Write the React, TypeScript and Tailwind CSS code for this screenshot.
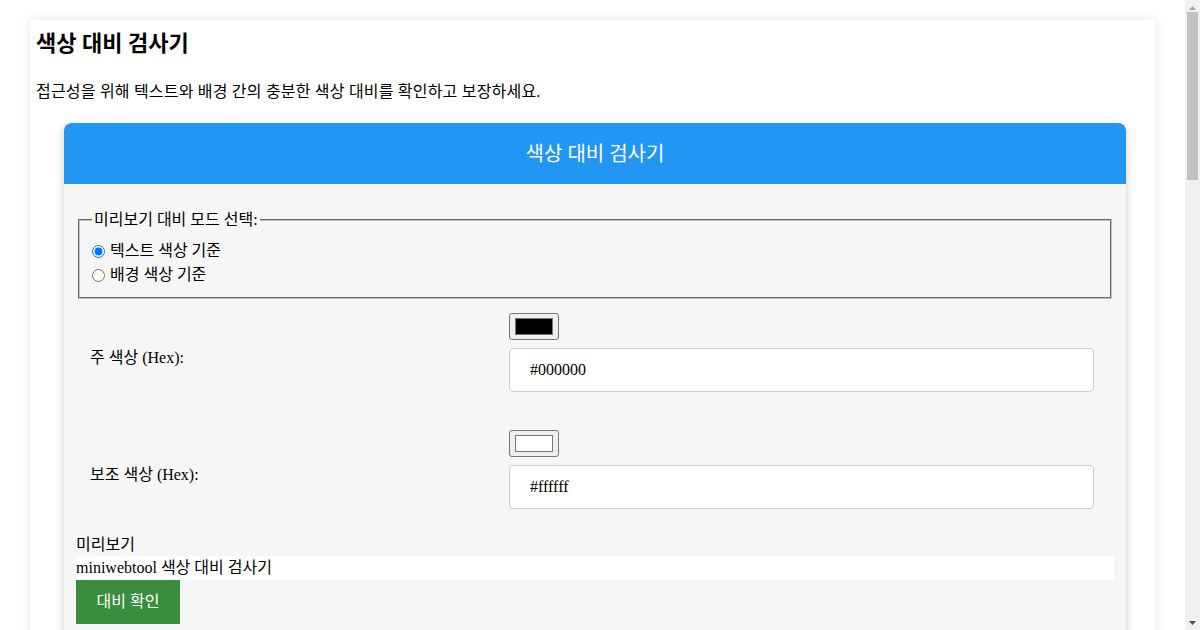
import React from "react";

const FONT = "[font-family:'Liberation_Serif','Noto_Sans_CJK_KR',serif]";

function Swatch({ color }: { color: string }) {
  return (
    <div className="w-[50px] h-[27px] border border-[#767676] rounded-[3px] bg-[#efefef] px-[5px] py-[4px]">
      <div className="w-full h-full border border-[#777777]" style={{ background: color }} />
    </div>
  );
}

function Row({ label, color, value }: { label: string; color: string; value: string }) {
  return (
    <div className="grid grid-cols-[419px_1fr] items-center">
      <div className="px-[12px] pt-[10px]">{label}</div>
      <div className="px-[12px] py-[12px]">
        <Swatch color={color} />
        <div className="mt-[8px] h-[44px] w-[585px] border border-[#cccccc] rounded-[4px] bg-white pl-[20px] flex items-center">
          {value}
        </div>
      </div>
    </div>
  );
}

function Scrollbar() {
  return (
    <div className="w-[15px] h-[630px] bg-[#f1f1f1] flex flex-col items-center shrink-0">
      <div className="h-[15px] w-full flex items-center justify-center">
        <svg width="7" height="4" viewBox="0 0 7 4"><path d="M0 4 L3.5 0 L7 4 Z" fill="#a3a3a3" /></svg>
      </div>
      <div className="w-[11px] h-[168px] bg-[#c1c1c1] mt-[-3px]" />
      <div className="flex-1" />
      <div className="h-[15px] w-full flex items-center justify-center">
        <svg width="7" height="4" viewBox="0 0 7 4"><path d="M0 0 L7 0 L3.5 4 Z" fill="#505050" /></svg>
      </div>
    </div>
  );
}

export default function App() {
  return (
    <div className={`${FONT} h-[630px] overflow-hidden flex bg-white text-black text-[16px]`}>
      <div className="flex-1 pt-[20px] px-[30px]">
        <div className="bg-white shadow-[0_0_10px_rgba(0,0,0,0.1)] p-[6px] h-[700px]">
          <h2 className="text-[22px] font-bold leading-[35px]">색상 대비 검사기</h2>
          <p className="mt-[19px] leading-[24px] tracking-[0.2px]">접근성을 위해 텍스트와 배경 간의 충분한 색상 대비를 확인하고 보장하세요.</p>
          <div className="mt-[19px] ml-[28px] w-[1062px] rounded-t-[8px] bg-[#f6f6f6] shadow-[0_2px_8px_rgba(0,0,0,0.2)] h-[600px]">
            <div className="h-[61px] rounded-t-[8px] bg-[#2196f3] text-white text-[20px] flex items-center justify-center">
              색상 대비 검사기
            </div>
            <div className="px-[12px] pt-[24px]">
              <fieldset className="mx-[2px] border-2 [border-style:groove] border-[#c0c0c0] px-[12px] pt-[8px] pb-[10px]">
                <legend className="px-[2px] leading-[23px]">미리보기 대비 모드 선택:</legend>
                <label className="flex items-center h-[24px]">
                  <input type="radio" name="mode" defaultChecked className="m-0 mr-[5px] w-[13px] h-[13px]" />
                  텍스트 색상 기준
                </label>
                <label className="flex items-center h-[24px]">
                  <input type="radio" name="mode" className="m-0 mr-[5px] w-[13px] h-[13px]" />
                  배경 색상 기준
                </label>
              </fieldset>
              <div className="mt-[2px] mx-[2px] flex flex-col gap-[14px]">
                <Row label="주 색상 (Hex):" color="#000000" value="#000000" />
                <Row label="보조 색상 (Hex):" color="#ffffff" value="#ffffff" />
              </div>
              <div className="mt-[12px] leading-[23px]">미리보기</div>
              <div className="w-[1038px] h-[24px] bg-white leading-[24px]">miniwebtool 색상 대비 검사기</div>
              <button className="h-[44px] w-[104px] bg-[#388e3c] text-white">대비 확인</button>
            </div>
          </div>
        </div>
      </div>
      <Scrollbar />
    </div>
  );
}
